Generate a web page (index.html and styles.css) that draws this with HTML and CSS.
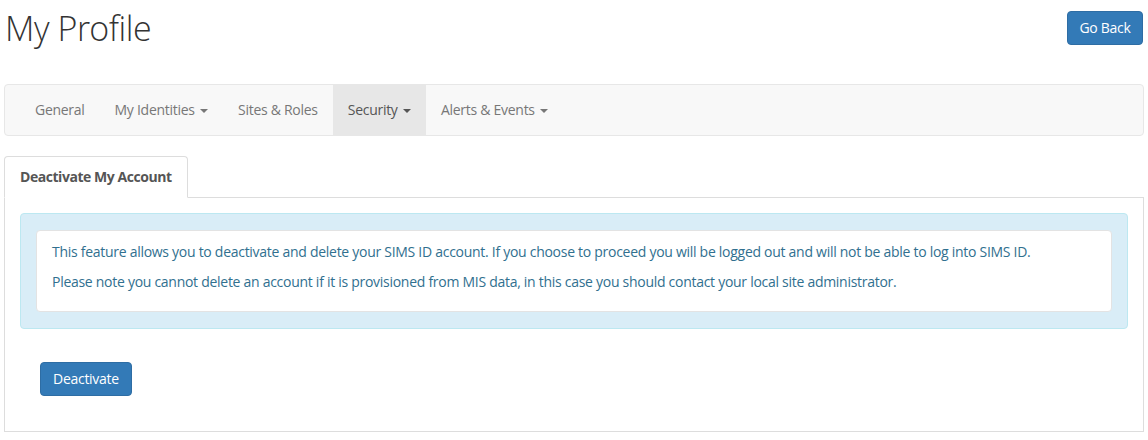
FILE: index.html
```html
<!DOCTYPE html>
<html>
<head>
<meta charset="utf-8">
<link rel="stylesheet" href="styles.css">
</head>
<body>
<div class="page">
  <div class="header">
    <h1 class="title">My Profile</h1>
    <button class="btn btn-primary go-back">Go Back</button>
  </div>
  <nav class="navbar">
    <ul class="nav">
      <li class="nav-item">General</li>
      <li class="nav-item">My Identities <span class="caret"></span></li>
      <li class="nav-item">Sites &amp; Roles</li>
      <li class="nav-item active">Security <span class="caret"></span></li>
      <li class="nav-item">Alerts &amp; Events <span class="caret"></span></li>
    </ul>
  </nav>
  <div class="tabs">
    <div class="tab active">Deactivate My Account</div>
  </div>
  <div class="tab-content">
    <div class="alert">
      <div class="well">
        <p>This feature allows you to deactivate and delete your SIMS ID account. If you choose to proceed you will be logged out and will not be able to log into SIMS ID.</p>
        <p>Please note you cannot delete an account if it is provisioned from MIS data, in this case you should contact your local site administrator.</p>
      </div>
    </div>
    <div class="actions">
      <button class="btn btn-primary">Deactivate</button>
    </div>
  </div>
</div>
</body>
</html>
```
FILE: styles.css
```css
* { box-sizing: border-box; }
html, body { margin: 0; padding: 0; background: #fff; }
body {
  font-family: "Open Sans", "Noto Sans", sans-serif;
  font-size: 14px;
  letter-spacing: -0.28px;
  color: #333;
}
.page { padding: 0 4px; }
.header {
  display: flex;
  justify-content: space-between;
  align-items: flex-start;
  height: 84px;
}
.title {
  margin: 6px 0 0 1px;
  font-family: "Open Sans Light", "Open Sans", sans-serif;
  font-size: 34px;
  font-weight: 300;
  letter-spacing: -0.4px;
  line-height: 44px;
  color: #333;
}
.btn {
  font-family: inherit;
  font-size: 14px;
  letter-spacing: -0.28px;
  line-height: 20px;
  padding: 6px 12px;
  border-radius: 4px;
  border: 1px solid transparent;
  cursor: pointer;
}
.btn-primary {
  background: #337ab7;
  border-color: #2e6da4;
  color: #fff;
}
.go-back {
  margin-top: 11px;
  margin-right: 1px;
  height: 34px;
  width: 76px;
  padding: 6px 0;
}
.navbar {
  background: #f8f8f8;
  border: 1px solid #e7e7e7;
  border-radius: 4px;
  height: 52px;
}
.nav {
  list-style: none;
  margin: 0;
  padding: 0 0 0 15px;
  display: flex;
}
.nav-item {
  padding: 15px 15px;
  line-height: 20px;
  color: #777;
  white-space: nowrap;
}
.nav-item.active {
  background: #e7e7e7;
  color: #555;
}
.caret {
  display: inline-block;
  width: 0;
  height: 0;
  margin-left: 2px;
  vertical-align: middle;
  border-top: 4px solid;
  border-right: 4px solid transparent;
  border-left: 4px solid transparent;
}
.tabs {
  margin-top: 20px;
  display: flex;
  border-bottom: 1px solid #ddd;
}
.tab {
  padding: 10px 15px;
  line-height: 20px;
  border: 1px solid #ddd;
  border-bottom-color: transparent;
  border-radius: 4px 4px 0 0;
  margin-bottom: -1px;
  background: #fff;
  font-weight: bold;
  letter-spacing: -0.45px;
  color: #555;
}
.tab-content {
  border: 1px solid #ddd;
  border-top: none;
  padding: 15px 15px 35px 15px;
}
.alert {
  background: #d9edf7;
  border: 1px solid #bce8f1;
  border-radius: 4px;
  padding: 16px 15px;
  color: #31708f;
}
.well {
  background: #fff;
  border: 1px solid #e3e3e3;
  border-radius: 4px;
  padding: 11px 15px 9px 15px;
}
.well p { margin: 0 0 10px 0; line-height: 20px; }
.actions { padding: 33px 20px 0 20px; }
```
